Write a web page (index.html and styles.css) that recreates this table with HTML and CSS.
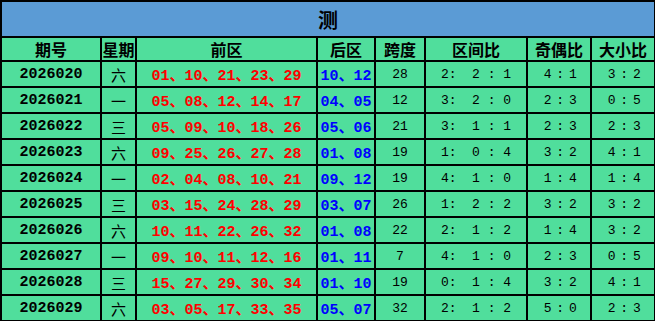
FILE: index.html
```
<!DOCTYPE html>
<html lang="zh">
<head>
<meta charset="utf-8">
<link rel="stylesheet" href="styles.css">
</head>
<body>
<table class="tbl">
<colgroup>
<col class="c1"><col class="c2"><col class="c3"><col class="c4"><col class="c5"><col class="c6"><col class="c7"><col class="c8">
</colgroup>
<tr class="title"><td colspan="8">测</td></tr>
<tr class="head"><td>期号</td><td>星期</td><td>前区</td><td>后区</td><td>跨度</td><td>区间比</td><td>奇偶比</td><td>大小比</td></tr>
<tr><td class="id">2026020</td><td class="wk">六</td><td class="front">01、10、21、23、29</td><td class="back">10、12</td><td class="num">28</td><td class="num">2:  2 : 1</td><td class="num tight">4 : 1</td><td class="num tight">3 : 2</td></tr>
<tr><td class="id">2026021</td><td class="wk">一</td><td class="front">05、08、12、14、17</td><td class="back">04、05</td><td class="num">12</td><td class="num">3:  2 : 0</td><td class="num tight">2 : 3</td><td class="num tight">0 : 5</td></tr>
<tr><td class="id">2026022</td><td class="wk">三</td><td class="front">05、09、10、18、26</td><td class="back">05、06</td><td class="num">21</td><td class="num">3:  1 : 1</td><td class="num tight">2 : 3</td><td class="num tight">2 : 3</td></tr>
<tr><td class="id">2026023</td><td class="wk">六</td><td class="front">09、25、26、27、28</td><td class="back">01、08</td><td class="num">19</td><td class="num">1:  0 : 4</td><td class="num tight">3 : 2</td><td class="num tight">4 : 1</td></tr>
<tr><td class="id">2026024</td><td class="wk">一</td><td class="front">02、04、08、10、21</td><td class="back">09、12</td><td class="num">19</td><td class="num">4:  1 : 0</td><td class="num tight">1 : 4</td><td class="num tight">1 : 4</td></tr>
<tr><td class="id">2026025</td><td class="wk">三</td><td class="front">03、15、24、28、29</td><td class="back">03、07</td><td class="num">26</td><td class="num">1:  2 : 2</td><td class="num tight">3 : 2</td><td class="num tight">3 : 2</td></tr>
<tr><td class="id">2026026</td><td class="wk">六</td><td class="front">10、11、22、26、32</td><td class="back">01、08</td><td class="num">22</td><td class="num">2:  1 : 2</td><td class="num tight">1 : 4</td><td class="num tight">3 : 2</td></tr>
<tr><td class="id">2026027</td><td class="wk">一</td><td class="front">09、10、11、12、16</td><td class="back">01、11</td><td class="num">7</td><td class="num">4:  1 : 0</td><td class="num tight">2 : 3</td><td class="num tight">0 : 5</td></tr>
<tr><td class="id">2026028</td><td class="wk">三</td><td class="front">15、27、29、30、34</td><td class="back">01、10</td><td class="num">19</td><td class="num">0:  1 : 4</td><td class="num tight">3 : 2</td><td class="num tight">4 : 1</td></tr>
<tr><td class="id">2026029</td><td class="wk">六</td><td class="front">03、05、17、33、35</td><td class="back">05、07</td><td class="num">32</td><td class="num">2:  1 : 2</td><td class="num tight">5 : 0</td><td class="num tight">2 : 3</td></tr>
</table>
</body>
</html>
```
FILE: styles.css
```
html, body {
  margin: 0;
  padding: 0;
  background: #ffffff;
}
.tbl {
  border-collapse: collapse;
  table-layout: fixed;
  width: 654px;
  background: #50de9c;
  font-family: "Liberation Mono", "Noto Sans CJK SC", monospace;
}
.tbl td {
  border: 2px solid #000;
  padding: 0;
  text-align: center;
  height: 24px;
  white-space: pre;
  overflow: hidden;
}
.c1 { width: 100px; }
.c2 { width: 35px; }
.c3 { width: 181px; }
.c4 { width: 58px; }
.c5 { width: 50px; }
.c6 { width: 102px; }
.c7 { width: 64px; }
.c8 { width: 64px; }
.title td {
  background: #5b9bd5;
  height: 34px;
  font-family: "Noto Sans CJK SC", sans-serif;
  font-size: 20px;
  font-weight: bold;
  color: #000;
}
.head td {
  height: 22px;
  font-family: "Noto Sans CJK SC", sans-serif;
  font-size: 16px;
  font-weight: bold;
  line-height: 20px;
}
.id {
  font-size: 15px;
  font-weight: bold;
  color: #000;
}
.wk {
  font-family: "Noto Sans CJK SC", sans-serif;
  font-size: 15px;
  color: #000;
}
.front {
  font-size: 15px;
  font-weight: bold;
  color: #ff0000;
}
.back {
  font-size: 15px;
  font-weight: bold;
  color: #0000ff;
}
.num {
  font-size: 13px;
  color: #000;
}
.tight {
  letter-spacing: -1.5px;
  text-indent: 1px;
}
```
